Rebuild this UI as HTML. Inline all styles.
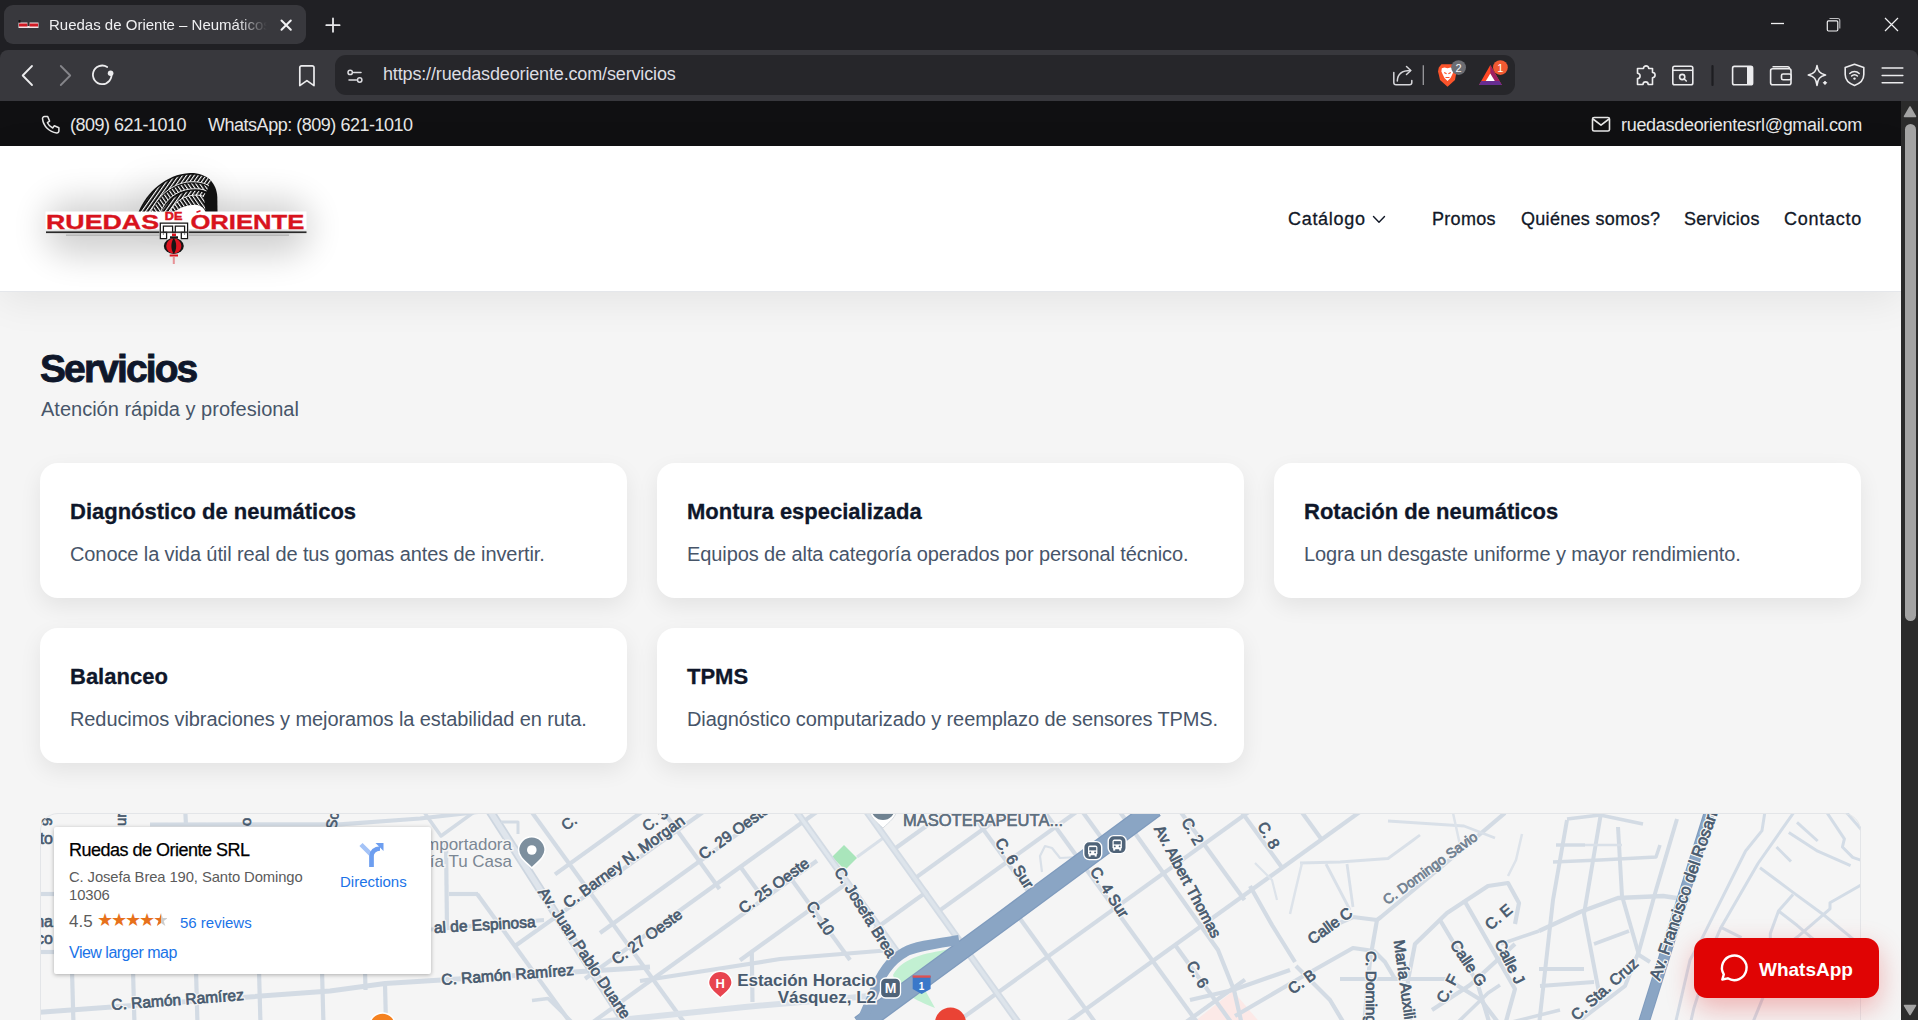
<!DOCTYPE html>
<html><head><meta charset="utf-8">
<style>
*{box-sizing:border-box;margin:0;padding:0}
html,body{width:1918px;height:1020px;overflow:hidden;background:#202024;font-family:"Liberation Sans",sans-serif}
.a{position:absolute;white-space:nowrap;line-height:1}
svg.a{overflow:visible}
#tabbar{position:absolute;left:0;top:0;width:1918px;height:50px;background:#202024}
#tab{position:absolute;left:4px;top:5px;width:302px;height:39px;background:#38383d;border-radius:9px}
#toolbar{position:absolute;left:0;top:50px;width:1918px;height:51px;background:#38383d;border-radius:8px 8px 0 0}
#url{position:absolute;left:335px;top:55px;width:1180px;height:40px;background:#26262a;border-radius:11px}
#topbar{position:absolute;left:0;top:101px;width:1901px;height:45px;background:#101012}
#header{position:absolute;left:0;top:146px;width:1901px;height:146px;background:#fff;border-bottom:1px solid #e5e7eb;box-shadow:0 8px 38px rgba(0,0,0,0.075)}
#scroll{position:absolute;left:1901px;top:101px;width:17px;height:919px;background:#2b2b2b}
.nav{top:209.5px;font-size:18px;letter-spacing:0.3px;color:#111827;-webkit-text-stroke:0.3px #111827}
.card{position:absolute;width:587px;height:135px;background:#fff;border-radius:18px;box-shadow:0 8px 22px rgba(0,0,0,0.075)}
.card h3{position:absolute;left:30px;top:37.5px;font-size:22px;line-height:1;font-weight:700;color:#0f172a;white-space:nowrap;-webkit-text-stroke:0.3px #0f172a}
.card p{position:absolute;left:30px;top:81px;font-size:20px;line-height:1;letter-spacing:-0.1px;color:#475569;white-space:nowrap}
</style></head>
<body>
<!-- browser chrome -->
<div id="tabbar"></div>
<div id="tab"></div>
<svg class="a" style="left:0;top:0" width="1918" height="101">
  <!-- favicon -->
  <rect x="18.5" y="22.5" width="20" height="5.5" fill="#f4e4e6"/>
  <rect x="19" y="23.5" width="8.5" height="3" fill="#d21a24"/>
  <rect x="29.5" y="23.5" width="8.5" height="3" fill="#d21a24"/>
  <rect x="27.5" y="22" width="2" height="4" fill="#333"/>
  <rect x="18.6" y="20" width="1.8" height="2.6" fill="#111"/>
  <!-- tab close -->
  <path d="M281.5 20.5 L290.8 29.8 M290.8 20.5 L281.5 29.8" stroke="#f2f2f4" stroke-width="2" stroke-linecap="round"/>
  <!-- plus -->
  <path d="M333 18.5 V31.8 M326.3 25.2 H339.6" stroke="#e8e8ea" stroke-width="1.8" stroke-linecap="round"/>
  <!-- window controls -->
  <path d="M1771 23.5 H1784" stroke="#f0f0f2" stroke-width="1.3"/>
  <rect x="1827.3" y="20.8" width="10.5" height="10.2" rx="1.2" fill="none" stroke="#f0f0f2" stroke-width="1.2"/>
  <path d="M1829.5 18.5 H1837.8 a2 2 0 0 1 2 2 V28.5" fill="none" stroke="#bdbdc0" stroke-width="1.1"/>
  <path d="M1885 18 L1898 31 M1898 18 L1885 31" stroke="#f0f0f2" stroke-width="1.2"/>
</svg>
<div class="a" style="left:49px;top:17px;font-size:15px;color:#f0f0f2;width:218px;overflow:hidden;-webkit-mask-image:linear-gradient(90deg,#000 86%,transparent 100%)">Ruedas de Oriente – Neumáticos</div>
<div id="toolbar"></div>
<div id="url"></div>
<svg class="a" style="left:0;top:0" width="1918" height="101">
  <!-- back / forward / reload -->
  <path d="M32 66 L22.7 75.5 L32 85" fill="none" stroke="#ececee" stroke-width="1.8" stroke-linecap="round" stroke-linejoin="round"/>
  <path d="M60.8 66 L70.2 75.5 L60.8 85" fill="none" stroke="#85858a" stroke-width="1.8" stroke-linecap="round" stroke-linejoin="round"/>
  <path d="M111.3 72.8 A9.3 9.3 0 1 1 107.2 67" fill="none" stroke="#ececee" stroke-width="1.8" stroke-linecap="round"/>
  <circle cx="110.6" cy="73.2" r="2.8" fill="#ececee"/>
  <!-- bookmark -->
  <path d="M301.5 65.8 H312.3 a1.7 1.7 0 0 1 1.7 1.7 V85.6 L306.9 80.6 L299.8 85.6 V67.5 a1.7 1.7 0 0 1 1.7 -1.7 Z" fill="none" stroke="#ececee" stroke-width="1.7" stroke-linejoin="round"/>
  <!-- sliders -->
  <circle cx="350.2" cy="72.4" r="2.2" fill="none" stroke="#dcdce0" stroke-width="1.5"/>
  <path d="M353.4 72.4 H361" stroke="#dcdce0" stroke-width="1.5" stroke-linecap="round"/>
  <circle cx="359.7" cy="80" r="2.2" fill="none" stroke="#dcdce0" stroke-width="1.5"/>
  <path d="M349 80 H356.5" stroke="#dcdce0" stroke-width="1.5" stroke-linecap="round"/>
  <!-- share -->
  <path d="M1393.8 72.5 V82.5 a2.3 2.3 0 0 0 2.3 2.3 H1409.5 a2.3 2.3 0 0 0 2.3 -2.3 V80.5" fill="none" stroke="#d6d6da" stroke-width="1.5" stroke-linecap="round"/>
  <path d="M1397.3 81 C1397.5 74 1402 70.5 1410.5 70.5" fill="none" stroke="#d6d6da" stroke-width="1.5" stroke-linecap="round"/>
  <path d="M1406.5 66.5 L1410.8 70.5 L1406.5 74.5" fill="none" stroke="#d6d6da" stroke-width="1.5" stroke-linecap="round" stroke-linejoin="round"/>
  <path d="M1423.3 65.3 V85" stroke="#9a9a9e" stroke-width="1.3"/>
  <!-- brave lion -->
  <path d="M1441.5 64.3 H1454 L1456.5 67.5 L1457 71.5 L1455.8 75.5 L1455 80 L1447.5 86.8 L1440 80 L1439 75.5 L1438 71.5 L1438.8 67.5 Z" fill="#fb542b"/>
  <path d="M1441.8 68.2 L1444.5 67.5 L1447.5 68.3 L1450.6 67.5 L1453.2 68.2 L1453.6 71.5 L1452 75 L1450.5 78 L1447.5 81 L1444.5 78 L1443 75 L1441.4 71.5 Z" fill="#fff"/>
  <path d="M1444.2 72.5 L1446.6 73.8 M1450.8 72.5 L1448.4 73.8 M1445.5 77.5 H1449.5" stroke="#fb542b" stroke-width="1.1"/>
  <circle cx="1458.6" cy="67.6" r="7.4" fill="#6c6d73"/>
  <text x="1458.6" y="71.6" font-size="11" fill="#f4f4f6" text-anchor="middle" font-family="Liberation Sans">2</text>
  <!-- BAT -->
  <path d="M1490.3 65 L1479 85 H1501.8 Z" fill="#ff4724"/>
  <path d="M1490.3 65 L1501.8 85 H1490.3 Z" fill="#9e1f63"/>
  <path d="M1479 85 L1481.3 81 H1499.5 L1501.8 85 Z" fill="#662d91"/>
  <path d="M1490.3 73.5 L1485.8 81 H1494.8 Z" fill="#fff"/>
  <circle cx="1500.4" cy="67.6" r="7.4" fill="#f05a32"/>
  <text x="1500.4" y="71.6" font-size="11" fill="#fff" text-anchor="middle" font-family="Liberation Sans">1</text>
  <!-- puzzle -->
  <path d="M1640 68.5 H1643.5 a2.6 2.6 0 1 1 5.2 0 H1652.5 V72.5 a2.6 2.6 0 1 1 0 5.2 V84.5 H1648.2 a2.6 2.6 0 1 0 -5.2 0 H1637.5 V78.5 a2.6 2.6 0 1 0 0 -5.2 V68.5 Z" fill="none" stroke="#ececee" stroke-width="1.6" stroke-linejoin="round"/>
  <!-- reader -->
  <rect x="1672.8" y="66.3" width="20" height="18.5" rx="1.8" fill="none" stroke="#ececee" stroke-width="1.6"/>
  <path d="M1672.8 70.3 H1692.8" stroke="#ececee" stroke-width="1.5"/>
  <circle cx="1682.2" cy="77" r="2.6" fill="none" stroke="#ececee" stroke-width="1.6"/>
  <path d="M1684.2 79 L1686.3 81" stroke="#ececee" stroke-width="1.6" stroke-linecap="round"/>
  <path d="M1712.5 66 V85" stroke="#1d1d21" stroke-width="2.2" stroke-linecap="round"/>
  <!-- sidebar -->
  <rect x="1732.6" y="66.4" width="20" height="18.4" rx="1.8" fill="none" stroke="#ececee" stroke-width="1.6"/>
  <rect x="1747" y="66.4" width="5.6" height="18.4" fill="#ececee"/>
  <!-- wallet -->
  <path d="M1772.5 66.8 H1787.5 a2 2 0 0 1 2 2" fill="none" stroke="#ececee" stroke-width="1.5"/>
  <rect x="1770.6" y="68.8" width="20.4" height="16" rx="2" fill="none" stroke="#ececee" stroke-width="1.6"/>
  <rect x="1781.5" y="74" width="9.5" height="5.8" rx="1.6" fill="#38383d" stroke="#ececee" stroke-width="1.6"/>
  <!-- sparkle -->
  <path d="M1817 65.5 C1817.8 71 1819.5 73.5 1825.5 75 C1819.5 76.5 1817.8 79 1817 85.5 C1816.2 79 1814.5 76.5 1808.3 75 C1814.5 73.5 1816.2 71 1817 65.5 Z" fill="none" stroke="#ececee" stroke-width="1.6" stroke-linejoin="round"/>
  <path d="M1825 78 C1825.4 81.2 1826.3 82.3 1829.5 82.8 C1826.3 83.3 1825.4 84.4 1825 87.6 C1824.6 84.4 1823.7 83.3 1820.5 82.8 C1823.7 82.3 1824.6 81.2 1825 78 Z" fill="#ececee" stroke="#38383d" stroke-width="1.2"/>
  <!-- shield -->
  <path d="M1854.5 64.2 L1863.8 67.6 V74.5 C1863.8 80 1860 83.5 1854.5 85.4 C1849 83.5 1845.2 80 1845.2 74.5 V67.6 Z" fill="none" stroke="#ececee" stroke-width="1.6" stroke-linejoin="round"/>
  <path d="M1849.8 73.5 a6.5 6.5 0 0 1 9.4 0 M1851.6 76 a3.8 3.8 0 0 1 5.8 0" fill="none" stroke="#ececee" stroke-width="1.5" stroke-linecap="round"/>
  <circle cx="1854.5" cy="78.6" r="1.2" fill="#ececee"/>
  <!-- hamburger -->
  <path d="M1882.2 68 H1902.8 M1882.2 75.5 H1902.8 M1882.2 82.8 H1902.8" stroke="#ececee" stroke-width="1.6" stroke-linecap="round"/>
</svg>
<div class="a" style="left:383px;top:65px;font-size:18px;letter-spacing:-0.15px;color:#dddde2">https://ruedasdeoriente.com/servicios</div>

<!-- website -->
<div style="position:absolute;left:0;top:101px;width:1901px;height:919px;background:#f5f5f5"></div>
<div id="topbar"></div>
<div id="header"></div>
<div id="scroll"></div>
<svg class="a" style="left:1901px;top:101px" width="17" height="919">
  <path d="M3.5 15.5 L9 6 L14.5 15.5 Z" fill="#a3a3a3" stroke="#a3a3a3" stroke-width="1.5" stroke-linejoin="round"/>
  <rect x="4" y="23" width="11" height="497" rx="5.5" fill="#a3a3a3"/>
  <path d="M3.5 904.5 L9 913.5 L14.5 904.5 Z" fill="#a3a3a3" stroke="#a3a3a3" stroke-width="1.5" stroke-linejoin="round"/>
</svg>
<svg class="a" style="left:0;top:101px" width="1901" height="45">
  <path d="M44.5 15.5 h3.2 l1.9 4.6 -2.2 1.6 a11 11 0 0 0 5.3 5.3 l1.6 -2.2 4.6 1.9 v3.2 a2 2 0 0 1 -2.2 2 A16 16 0 0 1 42.5 17.7 a2 2 0 0 1 2 -2.2 Z" fill="none" stroke="#e6e6e6" stroke-width="1.5" stroke-linejoin="round"/>
  <rect x="1592.5" y="16.5" width="17" height="13.5" rx="1.6" fill="none" stroke="#e6e6e6" stroke-width="1.6"/>
  <path d="M1593 18 L1601 24.2 L1609 18" fill="none" stroke="#e6e6e6" stroke-width="1.6" stroke-linejoin="round"/>
</svg>
<div class="a" style="left:70px;top:115.5px;font-size:18px;letter-spacing:-0.5px;color:#e6e6e6">(809) 621-1010</div>
<div class="a" style="left:208px;top:115.5px;font-size:18px;letter-spacing:-0.48px;color:#e6e6e6">WhatsApp: (809) 621-1010</div>
<div class="a" style="left:1621px;top:115.5px;font-size:18px;letter-spacing:-0.3px;color:#e6e6e6">ruedasdeorientesrl@gmail.com</div>

<div class="a nav" style="left:1288px;letter-spacing:0.7px">Catálogo</div>
<svg class="a" style="left:0;top:0" width="1" height="1"><path d="M1373.5 216.5 L1379 222.3 L1384.5 216.5" fill="none" stroke="#111827" stroke-width="1.4" stroke-linecap="round" stroke-linejoin="round"/></svg>
<div class="a nav" style="left:1432px">Promos</div>
<div class="a nav" style="left:1521px">Quiénes somos?</div>
<div class="a nav" style="left:1684px">Servicios</div>
<div class="a nav" style="left:1784px;letter-spacing:0.75px">Contacto</div>

<svg class="a" style="left:0;top:146px" width="400" height="146">
  <defs>
    <filter id="lb" x="-50%" y="-100%" width="200%" height="300%"><feGaussianBlur stdDeviation="17"/></filter>
    <clipPath id="tc"><rect x="130" y="160" width="100" height="65.5"/></clipPath>
  </defs>
  <g transform="translate(0,-146)">
  <rect x="45" y="200" width="265" height="55" rx="25" fill="#000" opacity="0.18" filter="url(#lb)"/>
  <rect x="130" y="180" width="90" height="40" rx="20" fill="#000" opacity="0.07" filter="url(#lb)"/>
  <!-- tire -->
  <defs>
    <pattern id="tp" width="3.2" height="3.2" patternUnits="userSpaceOnUse" patternTransform="rotate(35)"><rect width="3.2" height="3.2" fill="#111"/><rect width="1.1" height="3.2" fill="#fff"/></pattern>
    <pattern id="tp2" width="3.2" height="3.2" patternUnits="userSpaceOnUse" patternTransform="rotate(-35)"><rect width="3.2" height="3.2" fill="#111"/><rect width="1.1" height="3.2" fill="#fff"/></pattern>
  </defs>
  <g clip-path="url(#tc)">
    <path d="M138.5 212 C146 193 166 174 190 173 C206 172.5 216.5 182 217.3 197 L217.5 212 Z" fill="#111"/>
    <path d="M140.5 212 C147.5 194 167 175.5 190 174.8 C201 174.5 207 177 211.5 181 L209 186 C205 183 199 181.5 190 181.8 C172 183 157 197 150.5 212 Z" fill="url(#tp)"/>
    <path d="M151.5 212 C158 198 172 184.5 190 183.5 C199 183 204 184.5 208.5 187.5 L206.5 191 C202.5 189 197.5 188.3 190.5 189 C176 190.5 165.5 200 160.5 212 Z" fill="url(#tp2)"/>
    <path d="M161.5 212 C167 202 177 193 191 191 C197.5 190.5 202 191.5 205.5 193.5 L204 196.5 C200 195 196 194.7 191 195.5 C181 197 173.5 204 170 212 Z" fill="url(#tp)"/>
    <path d="M170 212 C173.5 204 181 197 191 195.5 C196 194.7 200 195 204 196.5 L205.5 212 C204.5 208.5 201.5 205.8 197.5 205 C190 204 180 207 174 212 Z" fill="url(#tp2)"/>
    <path d="M150.5 212 C157 197 172 183 190 181.8 C199 181.5 205 183 209 186 M160.5 212 C165.5 200 176 190.5 190.5 189 C197.5 188.3 202.5 189 206.5 191 M170 212 C173.5 204 181 197 191 195.5 C196 194.7 200 195 204 196.5" fill="none" stroke="#fff" stroke-width="0.9"/>
    <path d="M174 212 C180 207 190 204 197.5 205 C201.5 205.8 204.5 208.5 205.5 212 Z" fill="#fff"/>
  </g>
  <!-- white band -->
  <rect x="45.5" y="211.5" width="261" height="18" fill="#fff"/>
  <text x="46" y="228.6" font-family="Liberation Sans" font-weight="700" font-size="20" fill="#d8131d" stroke="#d8131d" stroke-width="0.35" textLength="113" lengthAdjust="spacingAndGlyphs">RUEDAS</text>
  <text x="164.8" y="219.8" font-family="Liberation Sans" font-weight="700" font-size="10" fill="#dc1420" stroke="#dc1420" stroke-width="0.5" textLength="17.5" lengthAdjust="spacingAndGlyphs">DE</text>
  <text x="190.4" y="229.2" font-family="Liberation Sans" font-weight="700" font-size="20.5" fill="#d8131d" stroke="#d8131d" stroke-width="0.35" textLength="114" lengthAdjust="spacingAndGlyphs">ORIENTE</text>
  <path d="M196.5 212.3 l4 -1.5" stroke="#dc1420" stroke-width="1.6"/>
  <!-- lines -->
  <rect x="46" y="231.4" width="260.5" height="1.7" fill="#2a2a2a"/>
  <rect x="66" y="234.5" width="223" height="1.4" fill="#b4b4b4"/>
  <!-- symbol -->
  <rect x="159.5" y="222.3" width="29" height="17" fill="#fff"/>
  <path d="M160.3 238.5 V223.2 H187.6 V238.5 H181.3 V232.4 H184.6 V226.1 H175.3 V232.4 H172.6 V226.1 H163.4 V232.4 H166.6 V238.5 Z" fill="none" stroke="#151515" stroke-width="1.25"/>
  <path d="M163.4 235 V232.4 M184.6 235 V232.4" stroke="#777" stroke-width="0.8"/>
  <rect x="160" y="231.4" width="28" height="1.7" fill="#2a2a2a" opacity="0.9"/>
  <!-- lantern -->
  <rect x="172" y="233.5" width="4" height="2.5" fill="#dc1420"/>
  <rect x="170" y="236.3" width="8" height="2.2" fill="#151515"/>
  <ellipse cx="173.8" cy="246" rx="10" ry="7.9" fill="#151515"/>
  <ellipse cx="173.8" cy="246" rx="7.6" ry="7.6" fill="#dc1420"/>
  <path d="M173.8 238.3 C170.6 242 170.6 250 173.8 253.8 C177 250 177 242 173.8 238.3 Z" fill="#151515"/>
  <rect x="169.7" y="254.5" width="8.3" height="2" fill="#dc1420"/>
  <rect x="172.8" y="257" width="2" height="7" fill="#e57a80" opacity="0.8"/>
  </g>
</svg>

<div class="a" style="left:40px;top:349px;font-size:39px;letter-spacing:-1.9px;font-weight:700;color:#0f172a;-webkit-text-stroke:0.9px #0f172a">Servicios</div>
<div class="a" style="left:41px;top:399px;font-size:20px;color:#475569">Atención rápida y profesional</div>

<div class="card" style="left:40px;top:463px"><h3>Diagnóstico de neumáticos</h3><p>Conoce la vida útil real de tus gomas antes de invertir.</p></div>
<div class="card" style="left:657px;top:463px"><h3>Montura especializada</h3><p>Equipos de alta categoría operados por personal técnico.</p></div>
<div class="card" style="left:1274px;top:463px"><h3>Rotación de neumáticos</h3><p>Logra un desgaste uniforme y mayor rendimiento.</p></div>
<div class="card" style="left:40px;top:628px"><h3>Balanceo</h3><p>Reducimos vibraciones y mejoramos la estabilidad en ruta.</p></div>
<div class="card" style="left:657px;top:628px"><h3>TPMS</h3><p>Diagnóstico computarizado y reemplazo de sensores TPMS.</p></div>

<div id="map" style="position:absolute;left:40px;top:813px;width:1821px;height:240px;background:#f5f5f5;overflow:hidden">
<svg style="position:absolute;left:-40px;top:-813px" width="1918" height="1020" font-family="Liberation Sans">
<rect x="0" y="0" width="1918" height="1020" fill="#f5f5f5"/>
<path d="M1190 1025 L1233 991 L1262 1025 Z" fill="#fce9e7"/>
<path d="M832 857 L844 845 L857 858 L845 870 Z" fill="#a9e5bb"/>
<path d="M893 975 C900 962 915 955 940 951 L957 947 L925 990 L935 1008 C915 1000 898 992 893 975 Z" fill="#c2f0d2"/>
<polyline points="185,805 186,826" fill="none" stroke="#d3dbe4" stroke-width="4.2" stroke-linejoin="round"/>
<polyline points="150,824.5 340,824.4 420,818.5 478,812" fill="none" stroke="#d3dbe4" stroke-width="4.2" stroke-linejoin="round"/>
<polyline points="72,970 73.5,1025" fill="none" stroke="#d3dbe4" stroke-width="4.2" stroke-linejoin="round"/>
<polyline points="133,970 134.5,1025" fill="none" stroke="#d3dbe4" stroke-width="4.2" stroke-linejoin="round"/>
<polyline points="196,970 197.5,1025" fill="none" stroke="#d3dbe4" stroke-width="4.2" stroke-linejoin="round"/>
<polyline points="259,970 260.5,1025" fill="none" stroke="#d3dbe4" stroke-width="4.2" stroke-linejoin="round"/>
<polyline points="322,970 323.5,1025" fill="none" stroke="#d3dbe4" stroke-width="4.2" stroke-linejoin="round"/>
<polyline points="35,1012.5 330,991 385,983.5 630,968.5 650,967" fill="none" stroke="#d3dbe4" stroke-width="5" stroke-linejoin="round"/>
<polyline points="35,894 56,894" fill="none" stroke="#d3dbe4" stroke-width="4.2" stroke-linejoin="round"/>
<polyline points="35,952 56,952" fill="none" stroke="#d3dbe4" stroke-width="4.2" stroke-linejoin="round"/>
<polyline points="365,970 365.5,990" fill="none" stroke="#d3dbe4" stroke-width="4.2" stroke-linejoin="round"/>
<polyline points="385,983.5 386,1025" fill="none" stroke="#d3dbe4" stroke-width="4.2" stroke-linejoin="round"/>
<polyline points="486,805 627,1025" fill="none" stroke="#cdd6e0" stroke-width="9" stroke-linejoin="round"/>
<polyline points="486,805 627,1025" fill="none" stroke="#dfe5ec" stroke-width="5.5" stroke-linejoin="round"/>
<polyline points="431,929.5 544,920" fill="none" stroke="#d3dbe4" stroke-width="4.2" stroke-linejoin="round"/>
<polyline points="446,840 447,930" fill="none" stroke="#d3dbe4" stroke-width="4.2" stroke-linejoin="round"/>
<polyline points="449,894 478,894" fill="none" stroke="#d3dbe4" stroke-width="4.2" stroke-linejoin="round"/>
<polyline points="515,946 706,810" fill="none" stroke="#d3dbe4" stroke-width="4.2" stroke-linejoin="round"/>
<polyline points="532,1000.5 548,998.5 575,1025" fill="none" stroke="#d3dbe4" stroke-width="3.5" stroke-linejoin="round"/>
<polyline points="424,812 441,836 474,812" fill="none" stroke="#d3dbe4" stroke-width="3.5" stroke-linejoin="round"/>
<polyline points="501,822 518,822 518,834" fill="none" stroke="#d3dbe4" stroke-width="3" stroke-linejoin="round"/>
<polyline points="555,874.4000000000001 645,809.6" fill="none" stroke="#d3dbe4" stroke-width="4.2" stroke-linejoin="round"/>
<polyline points="600,933.0 780,803.4" fill="none" stroke="#d3dbe4" stroke-width="4.2" stroke-linejoin="round"/>
<polyline points="585,978.8 826,805.28" fill="none" stroke="#d3dbe4" stroke-width="4.2" stroke-linejoin="round"/>
<polyline points="590,1024.2 817,860.76" fill="none" stroke="#d3dbe4" stroke-width="4.2" stroke-linejoin="round"/>
<polyline points="857,856.96 886,836.08" fill="none" stroke="#d9e0e8" stroke-width="3" stroke-linejoin="round"/>
<polyline points="740,960.2 850,881.0" fill="none" stroke="#d3dbe4" stroke-width="4.2" stroke-linejoin="round"/>
<polyline points="894,849.32 950,809.0" fill="none" stroke="#d3dbe4" stroke-width="4.2" stroke-linejoin="round"/>
<polyline points="912,880.36 1010,809.8000000000001" fill="none" stroke="#d3dbe4" stroke-width="4.2" stroke-linejoin="round"/>
<polyline points="874,929.72 928,890.84" fill="none" stroke="#d3dbe4" stroke-width="4.2" stroke-linejoin="round"/>
<polyline points="936,913.08 1080,809.4" fill="none" stroke="#d3dbe4" stroke-width="4.2" stroke-linejoin="round"/>
<polyline points="935,1037.8000000000002 1250,811.0" fill="none" stroke="#d3dbe4" stroke-width="4.2" stroke-linejoin="round"/>
<polyline points="1065,1024.2 1362,810.36" fill="none" stroke="#d3dbe4" stroke-width="4.2" stroke-linejoin="round"/>
<polyline points="1180,1026.4 1245,979.6" fill="none" stroke="#d3dbe4" stroke-width="4.2" stroke-linejoin="round"/>
<polyline points="526.625,805 686.125,1025" fill="none" stroke="#d3dbe4" stroke-width="4.2" stroke-linejoin="round"/>
<polyline points="477.15,894 572.125,1025" fill="none" stroke="#d3dbe4" stroke-width="4.2" stroke-linejoin="round"/>
<polyline points="658.625,805 719.525,889" fill="none" stroke="#d3dbe4" stroke-width="4.2" stroke-linejoin="round"/>
<polyline points="739.85,866 764.5,900" fill="none" stroke="#d3dbe4" stroke-width="4.2" stroke-linejoin="round"/>
<polyline points="789.8249999999999,877 850.0,960" fill="none" stroke="#d3dbe4" stroke-width="4.2" stroke-linejoin="round"/>
<polyline points="791.8,805 897,952" fill="none" stroke="#d3dbe4" stroke-width="7" stroke-linejoin="round"/>
<polyline points="791.8,805 897,952" fill="none" stroke="#dfe6ed" stroke-width="3.5" stroke-linejoin="round"/>
<polyline points="862,805 1020,1025" fill="none" stroke="#d3dbe4" stroke-width="7" stroke-linejoin="round"/>
<polyline points="862,805 1020,1025" fill="none" stroke="#dde4eb" stroke-width="3.5" stroke-linejoin="round"/>
<polyline points="965.625,805 1030.875,895" fill="none" stroke="#d3dbe4" stroke-width="4.2" stroke-linejoin="round"/>
<polyline points="1017.375,915 1097.125,1025" fill="none" stroke="#d3dbe4" stroke-width="4.2" stroke-linejoin="round"/>
<polyline points="1039.625,805 1199.125,1025" fill="none" stroke="#d3dbe4" stroke-width="4.2" stroke-linejoin="round"/>
<polyline points="1077.625,805 1108.0749999999998,847" fill="none" stroke="#d3dbe4" stroke-width="4.2" stroke-linejoin="round"/>
<polyline points="1175.125,945 1233.125,1025" fill="none" stroke="#d3dbe4" stroke-width="4.2" stroke-linejoin="round"/>
<polyline points="1115,805 1218,950 1234,990 1242,1025" fill="none" stroke="#d3dbe4" stroke-width="4.2" stroke-linejoin="round"/>
<polyline points="1175.625,805 1244.5,900" fill="none" stroke="#d3dbe4" stroke-width="4.2" stroke-linejoin="round"/>
<polyline points="1236.625,805 1282.3,868" fill="none" stroke="#d3dbe4" stroke-width="4.2" stroke-linejoin="round"/>
<polyline points="1296.625,805 1322.0,840" fill="none" stroke="#d3dbe4" stroke-width="4.2" stroke-linejoin="round"/>
<polyline points="640,981 780,959 891,950" fill="none" stroke="#d3dbe4" stroke-width="4.2" stroke-linejoin="round"/>
<polyline points="751.8,952 752.5,1002" fill="none" stroke="#d3dbe4" stroke-width="4.2" stroke-linejoin="round"/>
<polyline points="600,1022 745,1007 870,996" fill="none" stroke="#d9e0e8" stroke-width="6" stroke-linejoin="round"/>
<polyline points="1042,872 1040,856 1045,846 1052,848 1060,858 1078,857" fill="none" stroke="#d9e0e8" stroke-width="2.2" stroke-linejoin="round"/>
<polyline points="1190,1000 1233,990 1290,970" fill="none" stroke="#d3dbe4" stroke-width="4.2" stroke-linejoin="round"/>
<polyline points="1250,886 1272,925 1295,962" fill="none" stroke="#d3dbe4" stroke-width="4.2" stroke-linejoin="round"/>
<polyline points="1300,863 1340,862 1388,858.5 1412,841 1420,835" fill="none" stroke="#d9e0e8" stroke-width="2.8" stroke-linejoin="round"/>
<polyline points="1326,864 1350,910" fill="none" stroke="#d9e0e8" stroke-width="2.8" stroke-linejoin="round"/>
<polyline points="1347,864 1353,907" fill="none" stroke="#d9e0e8" stroke-width="2.8" stroke-linejoin="round"/>
<polyline points="1302,863 1296,888 1290,914" fill="none" stroke="#dde3ea" stroke-width="2.5" stroke-linejoin="round"/>
<polyline points="1255,863 1272,880 1277,900" fill="none" stroke="#dde3ea" stroke-width="2.2" stroke-linejoin="round"/>
<polyline points="1315,941 1335,925 1353,917 1377,920" fill="none" stroke="#d3dbe4" stroke-width="4.2" stroke-linejoin="round"/>
<polyline points="1377,920 1370,960 1364,1025" fill="none" stroke="#d3dbe4" stroke-width="4.2" stroke-linejoin="round"/>
<polyline points="1377,920 1381,917 1440,868 1505,813" fill="none" stroke="#d3dbe4" stroke-width="4.2" stroke-linejoin="round"/>
<polyline points="1235,1016 1300,978 1330,961 1353,948 1374,951 1385,962 1395,979" fill="none" stroke="#d3dbe4" stroke-width="4.2" stroke-linejoin="round"/>
<polyline points="1296,966 1330,1000 1345,1025" fill="none" stroke="#d3dbe4" stroke-width="4.2" stroke-linejoin="round"/>
<polyline points="1340,979 1447,979 1481,1000 1500,1025" fill="none" stroke="#d3dbe4" stroke-width="4.2" stroke-linejoin="round"/>
<polyline points="1405,1025 1408,980 1415,944 1447,913 1488,886 1508,883 1519,903 1515,924" fill="none" stroke="#d3dbe4" stroke-width="4.2" stroke-linejoin="round"/>
<polyline points="1440,920 1477,982 1490,1025" fill="none" stroke="#d3dbe4" stroke-width="4.2" stroke-linejoin="round"/>
<polyline points="1464,900 1515,989 1505,1025" fill="none" stroke="#d3dbe4" stroke-width="4.2" stroke-linejoin="round"/>
<polyline points="1432,1010 1470,985 1515,944" fill="none" stroke="#d3dbe4" stroke-width="4.2" stroke-linejoin="round"/>
<polyline points="1455,1025 1488,993 1500,985" fill="none" stroke="#d3dbe4" stroke-width="3.5" stroke-linejoin="round"/>
<polyline points="1388,821 1464,826 1495,838" fill="none" stroke="#d9e0e8" stroke-width="2.8" stroke-linejoin="round"/>
<polyline points="1453,813 1460,845" fill="none" stroke="#dde3ea" stroke-width="2.5" stroke-linejoin="round"/>
<polyline points="1522,834 1516,860 1508,876" fill="none" stroke="#dde3ea" stroke-width="2.5" stroke-linejoin="round"/>
<polyline points="1501,944 1539,931" fill="none" stroke="#d3dbe4" stroke-width="3.5" stroke-linejoin="round"/>
<polyline points="1567,820 1553,900 1539,1025" fill="none" stroke="#d3dbe4" stroke-width="4" stroke-linejoin="round"/>
<polyline points="1601,813 1584,914 1601,1003" fill="none" stroke="#d3dbe4" stroke-width="4" stroke-linejoin="round"/>
<polyline points="1618,827 1622,896 1639,955 1650,962" fill="none" stroke="#d3dbe4" stroke-width="4" stroke-linejoin="round"/>
<polyline points="1567,819 1600,815 1643,824" fill="none" stroke="#d3dbe4" stroke-width="3.5" stroke-linejoin="round"/>
<polyline points="1556,845 1585,845" fill="none" stroke="#d3dbe4" stroke-width="3.5" stroke-linejoin="round"/>
<polyline points="1585,845 1622,845" fill="none" stroke="#d9e0e8" stroke-width="2.5" stroke-linejoin="round"/>
<polyline points="1553,862 1600,860 1656,857 1660,845" fill="none" stroke="#d3dbe4" stroke-width="3.5" stroke-linejoin="round"/>
<polyline points="1539,931 1580,912 1618,898 1663,896 1690,900" fill="none" stroke="#d3dbe4" stroke-width="4.5" stroke-linejoin="round"/>
<polyline points="1539,969 1584,969" fill="none" stroke="#d3dbe4" stroke-width="4" stroke-linejoin="round"/>
<polyline points="1594,944 1629,931" fill="none" stroke="#d3dbe4" stroke-width="4" stroke-linejoin="round"/>
<polyline points="1540,986 1594,982" fill="none" stroke="#d3dbe4" stroke-width="4" stroke-linejoin="round"/>
<polyline points="1574,1025 1625,986 1639,951 1656,890 1677,819" fill="none" stroke="#d3dbe4" stroke-width="4" stroke-linejoin="round"/>
<polyline points="1500,1025 1560,1010" fill="none" stroke="#d3dbe4" stroke-width="3.5" stroke-linejoin="round"/>
<polyline points="1766,805 1762,830.6 1745.6,851 1702.4,937.7 1690,960 1675,1025" fill="none" stroke="#d3dce6" stroke-width="3" stroke-linejoin="round"/>
<polyline points="1799,805 1758,863.5 1721,927.4 1714.7,941.8 1694,1007.7 1690,1025" fill="none" stroke="#d3dce6" stroke-width="3" stroke-linejoin="round"/>
<polyline points="1797,822.4 1817.7,841" fill="none" stroke="#d3dce6" stroke-width="3" stroke-linejoin="round"/>
<polyline points="1788.8,832.6 1817.7,851.2 1850.6,865.6" fill="none" stroke="#d3dce6" stroke-width="3" stroke-linejoin="round"/>
<polyline points="1821.8,805 1844.4,838.8 1842.4,847 1852.7,857.4 1866,862" fill="none" stroke="#d3dce6" stroke-width="3" stroke-linejoin="round"/>
<polyline points="1840,805 1866,835" fill="none" stroke="#d3dce6" stroke-width="3" stroke-linejoin="round"/>
<polyline points="1776.5,847 1791,861.5" fill="none" stroke="#d3dce6" stroke-width="3" stroke-linejoin="round"/>
<polyline points="1760,867.7 1793,892.4 1823.9,915 1846.5,933.6 1866,950" fill="none" stroke="#d3dce6" stroke-width="3" stroke-linejoin="round"/>
<polyline points="1793,894.4 1778.5,911 1770.3,933.6 1770.3,960" fill="none" stroke="#d3dce6" stroke-width="3" stroke-linejoin="round"/>
<polyline points="1778.5,911 1797,925.3 1811.5,937.7" fill="none" stroke="#d3dce6" stroke-width="3" stroke-linejoin="round"/>
<polyline points="1760,965 1799,935.6 1830,908.8 1830,902.7 1858.9,886.2 1866,883" fill="none" stroke="#d3dce6" stroke-width="3" stroke-linejoin="round"/>
<polyline points="1721,927.4 1741.5,937.7" fill="none" stroke="#d3dce6" stroke-width="3" stroke-linejoin="round"/>
<polyline points="1751.8,1025 1764,995" fill="none" stroke="#d3dce6" stroke-width="3" stroke-linejoin="round"/>
<polyline points="1811.5,937.7 1840,960 1866,975" fill="none" stroke="#d3dce6" stroke-width="3" stroke-linejoin="round"/>
<polyline points="860,1025 1000,922.5 1155,808" fill="none" stroke="#7f9bbd" stroke-width="19.5" />
<polyline points="860,1025 1000,922.5 1155,808" fill="none" stroke="#8aa5c4" stroke-width="17" />
<path d="M959 940 C940 943 915 946 905 952 C890 960 880 975 873 995 L860 1025" fill="none" stroke="#8aa5c4" stroke-width="10"/>
<polyline points="1643,1025 1711,808" fill="none" stroke="#7f9bbd" stroke-width="11.5" />
<polyline points="1643,1025 1711,808" fill="none" stroke="#8aa5c4" stroke-width="9.5" />
<text x="178" y="1005" font-size="15.5" fill="#485a6e" text-anchor="middle" stroke="#f5f5f5" stroke-width="3.2" stroke-linejoin="round" transform="rotate(-4.3 178 1005)">C. Ramón Ramírez</text>
<text x="178" y="1005" font-size="15.5" fill="#485a6e" text-anchor="middle" stroke="#485a6e" stroke-width="0.7" transform="rotate(-4.3 178 1005)">C. Ramón Ramírez</text>
<text x="508" y="980" font-size="15.5" fill="#485a6e" text-anchor="middle" stroke="#f5f5f5" stroke-width="3.2" stroke-linejoin="round" transform="rotate(-4.3 508 980)">C. Ramón Ramírez</text>
<text x="508" y="980" font-size="15.5" fill="#485a6e" text-anchor="middle" stroke="#485a6e" stroke-width="0.7" transform="rotate(-4.3 508 980)">C. Ramón Ramírez</text>
<text x="485" y="930" font-size="15.5" fill="#485a6e" text-anchor="middle" stroke="#f5f5f5" stroke-width="3.2" stroke-linejoin="round" transform="rotate(-3.5 485 930)">al de Espinosa</text>
<text x="485" y="930" font-size="15.5" fill="#485a6e" text-anchor="middle" stroke="#485a6e" stroke-width="0.7" transform="rotate(-3.5 485 930)">al de Espinosa</text>
<text x="580" y="956" font-size="15.5" fill="#485a6e" text-anchor="middle" stroke="#f5f5f5" stroke-width="3.2" stroke-linejoin="round" transform="rotate(56.5 580 956)">Av. Juan Pablo Duarte</text>
<text x="580" y="956" font-size="15.5" fill="#485a6e" text-anchor="middle" stroke="#485a6e" stroke-width="0.7" transform="rotate(56.5 580 956)">Av. Juan Pablo Duarte</text>
<text x="627" y="866" font-size="15.5" fill="#485a6e" text-anchor="middle" stroke="#f5f5f5" stroke-width="3.2" stroke-linejoin="round" transform="rotate(-36 627 866)">C. Barney N. Morgan</text>
<text x="627" y="866" font-size="15.5" fill="#485a6e" text-anchor="middle" stroke="#485a6e" stroke-width="0.7" transform="rotate(-36 627 866)">C. Barney N. Morgan</text>
<text x="737" y="836" font-size="15.5" fill="#485a6e" text-anchor="middle" stroke="#f5f5f5" stroke-width="3.2" stroke-linejoin="round" transform="rotate(-36 737 836)">C. 29 Oeste</text>
<text x="737" y="836" font-size="15.5" fill="#485a6e" text-anchor="middle" stroke="#485a6e" stroke-width="0.7" transform="rotate(-36 737 836)">C. 29 Oeste</text>
<text x="650" y="941" font-size="15.5" fill="#485a6e" text-anchor="middle" stroke="#f5f5f5" stroke-width="3.2" stroke-linejoin="round" transform="rotate(-36 650 941)">C. 27 Oeste</text>
<text x="650" y="941" font-size="15.5" fill="#485a6e" text-anchor="middle" stroke="#485a6e" stroke-width="0.7" transform="rotate(-36 650 941)">C. 27 Oeste</text>
<text x="777" y="890" font-size="15.5" fill="#485a6e" text-anchor="middle" stroke="#f5f5f5" stroke-width="3.2" stroke-linejoin="round" transform="rotate(-36 777 890)">C. 25 Oeste</text>
<text x="777" y="890" font-size="15.5" fill="#485a6e" text-anchor="middle" stroke="#485a6e" stroke-width="0.7" transform="rotate(-36 777 890)">C. 25 Oeste</text>
<text x="816" y="921" font-size="15.5" fill="#485a6e" text-anchor="middle" stroke="#f5f5f5" stroke-width="3.2" stroke-linejoin="round" transform="rotate(56.5 816 921)">C. 10</text>
<text x="816" y="921" font-size="15.5" fill="#485a6e" text-anchor="middle" stroke="#485a6e" stroke-width="0.7" transform="rotate(56.5 816 921)">C. 10</text>
<text x="861" y="915" font-size="15.5" fill="#485a6e" text-anchor="middle" stroke="#f5f5f5" stroke-width="3.2" stroke-linejoin="round" transform="rotate(58 861 915)">C. Josefa Brea</text>
<text x="861" y="915" font-size="15.5" fill="#485a6e" text-anchor="middle" stroke="#485a6e" stroke-width="0.7" transform="rotate(58 861 915)">C. Josefa Brea</text>
<text x="1010" y="866" font-size="15.5" fill="#485a6e" text-anchor="middle" stroke="#f5f5f5" stroke-width="3.2" stroke-linejoin="round" transform="rotate(57 1010 866)">C. 6 Sur</text>
<text x="1010" y="866" font-size="15.5" fill="#485a6e" text-anchor="middle" stroke="#485a6e" stroke-width="0.7" transform="rotate(57 1010 866)">C. 6 Sur</text>
<text x="1105" y="895" font-size="15.5" fill="#485a6e" text-anchor="middle" stroke="#f5f5f5" stroke-width="3.2" stroke-linejoin="round" transform="rotate(57 1105 895)">C. 4 Sur</text>
<text x="1105" y="895" font-size="15.5" fill="#485a6e" text-anchor="middle" stroke="#485a6e" stroke-width="0.7" transform="rotate(57 1105 895)">C. 4 Sur</text>
<text x="1183" y="884" font-size="15.5" fill="#485a6e" text-anchor="middle" stroke="#f5f5f5" stroke-width="3.2" stroke-linejoin="round" transform="rotate(62 1183 884)">Av. Albert Thomas</text>
<text x="1183" y="884" font-size="15.5" fill="#485a6e" text-anchor="middle" stroke="#485a6e" stroke-width="0.7" transform="rotate(62 1183 884)">Av. Albert Thomas</text>
<text x="1188" y="834" font-size="15.5" fill="#485a6e" text-anchor="middle" stroke="#f5f5f5" stroke-width="3.2" stroke-linejoin="round" transform="rotate(60 1188 834)">C. 2</text>
<text x="1188" y="834" font-size="15.5" fill="#485a6e" text-anchor="middle" stroke="#485a6e" stroke-width="0.7" transform="rotate(60 1188 834)">C. 2</text>
<text x="1264" y="838" font-size="15.5" fill="#485a6e" text-anchor="middle" stroke="#f5f5f5" stroke-width="3.2" stroke-linejoin="round" transform="rotate(60 1264 838)">C. 8</text>
<text x="1264" y="838" font-size="15.5" fill="#485a6e" text-anchor="middle" stroke="#485a6e" stroke-width="0.7" transform="rotate(60 1264 838)">C. 8</text>
<text x="1193" y="977" font-size="15.5" fill="#485a6e" text-anchor="middle" stroke="#f5f5f5" stroke-width="3.2" stroke-linejoin="round" transform="rotate(60 1193 977)">C. 6</text>
<text x="1193" y="977" font-size="15.5" fill="#485a6e" text-anchor="middle" stroke="#485a6e" stroke-width="0.7" transform="rotate(60 1193 977)">C. 6</text>
<text x="1433" y="872" font-size="14" fill="#6f7f90" text-anchor="middle" stroke="#f5f5f5" stroke-width="3.2" stroke-linejoin="round" transform="rotate(-36 1433 872)">C. Domingo Savio</text>
<text x="1433" y="872" font-size="14" fill="#6f7f90" text-anchor="middle" stroke="#6f7f90" stroke-width="0.7" transform="rotate(-36 1433 872)">C. Domingo Savio</text>
<text x="1333" y="930" font-size="15.5" fill="#485a6e" text-anchor="middle" stroke="#f5f5f5" stroke-width="3.2" stroke-linejoin="round" transform="rotate(-36 1333 930)">Calle C</text>
<text x="1333" y="930" font-size="15.5" fill="#485a6e" text-anchor="middle" stroke="#485a6e" stroke-width="0.7" transform="rotate(-36 1333 930)">Calle C</text>
<text x="1305" y="986" font-size="15.5" fill="#485a6e" text-anchor="middle" stroke="#f5f5f5" stroke-width="3.2" stroke-linejoin="round" transform="rotate(-36 1305 986)">C. B</text>
<text x="1305" y="986" font-size="15.5" fill="#485a6e" text-anchor="middle" stroke="#485a6e" stroke-width="0.7" transform="rotate(-36 1305 986)">C. B</text>
<text x="1366" y="1000" font-size="15.5" fill="#485a6e" text-anchor="middle" stroke="#f5f5f5" stroke-width="3.2" stroke-linejoin="round" transform="rotate(90 1366 1000)">C. Dominguez</text>
<text x="1366" y="1000" font-size="15.5" fill="#485a6e" text-anchor="middle" stroke="#485a6e" stroke-width="0.7" transform="rotate(90 1366 1000)">C. Dominguez</text>
<text x="1402" y="1000" font-size="15.5" fill="#485a6e" text-anchor="middle" stroke="#f5f5f5" stroke-width="3.2" stroke-linejoin="round" transform="rotate(82 1402 1000)">María Auxiliadora</text>
<text x="1402" y="1000" font-size="15.5" fill="#485a6e" text-anchor="middle" stroke="#485a6e" stroke-width="0.7" transform="rotate(82 1402 1000)">María Auxiliadora</text>
<text x="1452" y="991" font-size="15.5" fill="#485a6e" text-anchor="middle" stroke="#f5f5f5" stroke-width="3.2" stroke-linejoin="round" transform="rotate(-62 1452 991)">C. F</text>
<text x="1452" y="991" font-size="15.5" fill="#485a6e" text-anchor="middle" stroke="#485a6e" stroke-width="0.7" transform="rotate(-62 1452 991)">C. F</text>
<text x="1464" y="966" font-size="15.5" fill="#485a6e" text-anchor="middle" stroke="#f5f5f5" stroke-width="3.2" stroke-linejoin="round" transform="rotate(56 1464 966)">Calle G</text>
<text x="1464" y="966" font-size="15.5" fill="#485a6e" text-anchor="middle" stroke="#485a6e" stroke-width="0.7" transform="rotate(56 1464 966)">Calle G</text>
<text x="1502" y="921" font-size="15.5" fill="#485a6e" text-anchor="middle" stroke="#f5f5f5" stroke-width="3.2" stroke-linejoin="round" transform="rotate(-40 1502 921)">C. E</text>
<text x="1502" y="921" font-size="15.5" fill="#485a6e" text-anchor="middle" stroke="#485a6e" stroke-width="0.7" transform="rotate(-40 1502 921)">C. E</text>
<text x="1505" y="964" font-size="15.5" fill="#485a6e" text-anchor="middle" stroke="#f5f5f5" stroke-width="3.2" stroke-linejoin="round" transform="rotate(63 1505 964)">Calle J</text>
<text x="1505" y="964" font-size="15.5" fill="#485a6e" text-anchor="middle" stroke="#485a6e" stroke-width="0.7" transform="rotate(63 1505 964)">Calle J</text>
<text x="1608" y="993" font-size="15.5" fill="#485a6e" text-anchor="middle" stroke="#f5f5f5" stroke-width="3.2" stroke-linejoin="round" transform="rotate(-42 1608 993)">C. Sta. Cruz</text>
<text x="1608" y="993" font-size="15.5" fill="#485a6e" text-anchor="middle" stroke="#485a6e" stroke-width="0.7" transform="rotate(-42 1608 993)">C. Sta. Cruz</text>
<text x="1690" y="893" font-size="16.5" fill="#485a6e" text-anchor="middle" stroke="#f5f5f5" stroke-width="3.2" stroke-linejoin="round" transform="rotate(-71 1690 893)">Av. Francisco del Rosario</text>
<text x="1690" y="893" font-size="16.5" fill="#485a6e" text-anchor="middle" stroke="#485a6e" stroke-width="0.7" transform="rotate(-71 1690 893)">Av. Francisco del Rosario</text>
<!-- grey text labels -->
<text x="512" y="850" font-size="17" fill="#7b8794" text-anchor="end" stroke="#f5f5f5" stroke-width="3" paint-order="stroke">Importadora</text>
<text x="512" y="867" font-size="17" fill="#7b8794" text-anchor="end" stroke="#f5f5f5" stroke-width="3" paint-order="stroke">Ferretería Tu Casa</text>
<path d="M531.8 868 C526 862 518.5 857 518.5 850 A13.3 13.3 0 1 1 545.1 850 C545.1 857 537.6 862 531.8 868 Z" fill="#7d8f9e" stroke="#fff" stroke-width="1.5"/>
<circle cx="531.8" cy="850" r="4.8" fill="#fff"/>
<text x="903" y="826" font-size="16.5" fill="#5f7080" stroke="#f5f5f5" stroke-width="3" paint-order="stroke">MASOTERAPEUTA...</text><text x="903" y="826" font-size="16.5" fill="#5f7080" stroke="#5f7080" stroke-width="0.4">MASOTERAPEUTA...</text>
<path d="M883 828 C877 822 869 817 869 808 A14 14 0 1 1 897 808 C897 817 889 822 883 828 Z" fill="#fff" stroke="#d8dde2" stroke-width="1"/><circle cx="883" cy="808" r="12" fill="#6f8291"/>
<!-- Estacion -->
<text x="876" y="986" font-size="17" font-weight="700" fill="#485a6e" text-anchor="end" stroke="#f5f5f5" stroke-width="3" paint-order="stroke">Estación Horacio</text>
<text x="876" y="1003" font-size="17" font-weight="700" fill="#485a6e" text-anchor="end" stroke="#f5f5f5" stroke-width="3" paint-order="stroke">Vásquez, L2</text>
<path d="M720.3 998 C715 993 708.5 989 708.5 983 A11.8 11.8 0 1 1 732.1 983 C732.1 989 725.6 993 720.3 998 Z" fill="#e8444f" stroke="#fff" stroke-width="1.5"/>
<text x="720.3" y="988" font-size="13" font-weight="700" fill="#fff" text-anchor="middle">H</text>
<rect x="880.5" y="978" width="20" height="20" rx="5" fill="#4f6378" stroke="#fff" stroke-width="1.3"/>
<text x="890.5" y="993" font-size="14" font-weight="700" fill="#fff" text-anchor="middle">M</text>
<path d="M912.7 976 H930.6 V989 L921.6 994 L912.7 989 Z" fill="#3a78c9"/>
<rect x="912.7" y="975.4" width="17.9" height="2.3" fill="#e05050"/>
<text x="921.6" y="990" font-size="10" font-weight="700" fill="#fff" text-anchor="middle">1</text>
<rect x="1083.7" y="841.6" width="18" height="18" rx="5.5" fill="#4f6378" stroke="#fff" stroke-width="1.4"/><rect x="1088.0" y="845.4" width="9.4" height="9.8" rx="2" fill="#fff"/><rect x="1089.2" y="847.1" width="7" height="3.3" fill="#4f6378"/><circle cx="1090.3" cy="852.4" r="0.9" fill="#4f6378"/><circle cx="1095.1000000000001" cy="852.4" r="0.9" fill="#4f6378"/><rect x="1088.7" y="855.0" width="2" height="1.6" fill="#fff"/><rect x="1094.7" y="855.0" width="2" height="1.6" fill="#fff"/>
<rect x="1108.2" y="835.6" width="18" height="18" rx="5.5" fill="#4f6378" stroke="#fff" stroke-width="1.4"/><rect x="1112.5" y="839.4" width="9.4" height="9.8" rx="2" fill="#fff"/><rect x="1113.7" y="841.1" width="7" height="3.3" fill="#4f6378"/><circle cx="1114.8" cy="846.4" r="0.9" fill="#4f6378"/><circle cx="1119.6000000000001" cy="846.4" r="0.9" fill="#4f6378"/><rect x="1113.2" y="849.0" width="2" height="1.6" fill="#fff"/><rect x="1119.2" y="849.0" width="2" height="1.6" fill="#fff"/>
<circle cx="950.5" cy="1023" r="15.5" fill="#ea4335"/>
<circle cx="382.5" cy="1026" r="13" fill="#f5811f" stroke="#fff" stroke-width="1.5"/>
<path d="M1233 1025 L1280 1025" stroke="none"/>

<text x="53" y="844" font-size="16" fill="#485a6e" text-anchor="end" stroke="#485a6e" stroke-width="0.6">to</text>
<text x="53" y="927" font-size="16" fill="#485a6e" text-anchor="end" stroke="#485a6e" stroke-width="0.6">na</text>
<text x="53" y="944" font-size="16" fill="#485a6e" text-anchor="end" stroke="#485a6e" stroke-width="0.6">co</text>
<text x="52" y="826" font-size="15" fill="#485a6e" stroke="#485a6e" stroke-width="0.6" transform="rotate(-90 52 826)">9</text>
<text x="126" y="826" font-size="15" fill="#485a6e" stroke="#485a6e" stroke-width="0.6" transform="rotate(-90 126 826)">un</text>
<text x="251" y="826" font-size="15" fill="#485a6e" stroke="#485a6e" stroke-width="0.6" transform="rotate(-90 251 826)">o</text>
<text x="336" y="830" font-size="15" fill="#485a6e" stroke="#485a6e" stroke-width="0.6" transform="rotate(-80 336 830)">Sc</text>
<text x="566" y="831" font-size="15" fill="#485a6e" stroke="#485a6e" stroke-width="0.6" transform="rotate(-36 566 831)">C.</text>
<text x="647" y="832" font-size="15" fill="#485a6e" stroke="#485a6e" stroke-width="0.6" transform="rotate(-36 647 832)">C. 3</text>

</svg>
<div style="position:absolute;left:14px;top:14px;width:377px;height:147px;background:#fff;border-radius:2px;box-shadow:0 1px 4px rgba(0,0,0,0.3)">
  <div class="a" style="left:15px;top:14px;font-size:18px;letter-spacing:-0.5px;color:#000;-webkit-text-stroke:0.25px #000">Ruedas de Oriente SRL</div>
  <div class="a" style="left:15px;top:40.5px;font-size:14.8px;letter-spacing:-0.1px;color:#5b5b5b;line-height:18px">C. Josefa Brea 190, Santo Domingo<br>10306</div>
  <div class="a" style="left:15px;top:86px;font-size:17px;color:#5b5b5b">4.5</div>
  <div class="a" style="left:43px;top:85px;font-size:17.5px;letter-spacing:-2.1px;color:#e7711b">★★★★<span style="background:linear-gradient(90deg,#e7711b 55%,#ccc 55%);-webkit-background-clip:text;color:transparent">★</span></div>
  <div class="a" style="left:126px;top:88px;font-size:15px;color:#1a73e8">56 reviews</div>
  <div class="a" style="left:15px;top:117.5px;font-size:16px;letter-spacing:-0.5px;color:#1a73e8">View larger map</div>
  <svg class="a" style="left:306px;top:16px" width="26" height="26"><path d="M1 1.5 L11.5 12 L11.5 24" fill="none" stroke="#a4c3f7" stroke-width="4.5"/><path d="M11.5 24 V13 C11.5 9 15 5.5 20 5.5" fill="none" stroke="#6d9ef0" stroke-width="4.5"/><path d="M15.5 0 H23.5 V8 Z" fill="#6d9ef0"/></svg>
  <div class="a" style="left:286px;top:47px;font-size:15px;color:#1a73e8">Directions</div>
</div>

</div>

<div style="position:absolute;left:40px;top:813px;width:1821px;height:240px;border:1px solid #e3e5e8;border-radius:18px"></div>
<!-- whatsapp button -->
<div style="position:absolute;left:1694px;top:938px;width:185px;height:60px;background:#e00404;border-radius:13px;box-shadow:0 10px 28px rgba(224,4,4,0.28)"></div>
<svg class="a" style="left:0;top:0" width="1" height="1">
  <path d="M1722.3 979.5 L1723.8 974.3 A12.3 12.3 0 1 1 1727.8 978.3 Z" fill="none" stroke="#fff" stroke-width="2.4" stroke-linejoin="round"/>
</svg>
<div class="a" style="left:1759px;top:959.5px;font-size:19px;font-weight:700;color:#fff">WhatsApp</div>

</body></html>
